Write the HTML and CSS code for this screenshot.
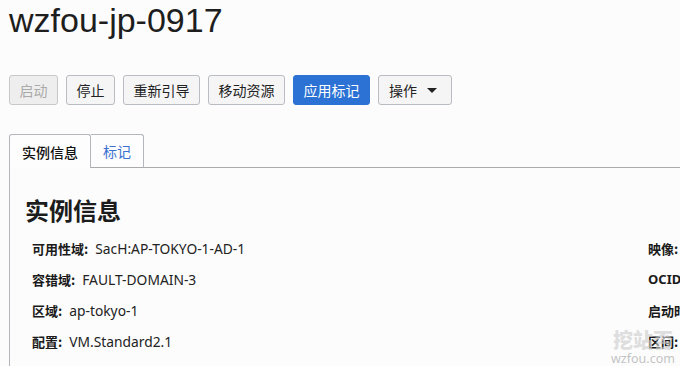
FILE: index.html
```html
<!DOCTYPE html>
<html lang="zh">
<head>
<meta charset="utf-8">
<link rel="stylesheet" href="styles.css">
</head>
<body>
<div class="page">
  <h1 class="title">wzfou-jp-0917</h1>
  <div class="actions">
    <button class="btn" disabled>启动</button>
    <button class="btn">停止</button>
    <button class="btn">重新引导</button>
    <button class="btn">移动资源</button>
    <button class="btn primary">应用标记</button>
    <button class="btn menu">操作 <span class="caret"></span></button>
  </div>
  <div class="tabs">
    <div class="tab active">实例信息</div>
    <div class="tab link">标记</div>
    <div class="tab-rest"></div>
  </div>
  <div class="panel">
    <h2 class="section">实例信息</h2>
    <div class="grid">
      <div class="row"><span class="lbl">可用性域:</span><span class="val">SacH:AP-TOKYO-1-AD-1</span></div>
      <div class="row"><span class="lbl">映像:</span></div>
      <div class="row"><span class="lbl">容错域:</span><span class="val">FAULT-DOMAIN-3</span></div>
      <div class="row"><span class="lbl latin">OCID:</span></div>
      <div class="row"><span class="lbl">区域:</span><span class="val">ap-tokyo-1</span></div>
      <div class="row"><span class="lbl">启动时间:</span></div>
      <div class="row"><span class="lbl">配置:</span><span class="val">VM.Standard2.1</span></div>
      <div class="row"><span class="lbl">区间:</span></div>
    </div>
  </div>
  <div class="watermark"><span class="wm-cn">挖站否</span><span class="wm-en">wzfou.com</span></div>
</div>
</body>
</html>
```

FILE: styles.css
```css
html, body {
  margin: 0;
  padding: 0;
  background: #fcfcfc;
  overflow: hidden;
}
body {
  font-family: "Noto Sans", "Noto Sans CJK SC", sans-serif;
  color: #222;
  width: 680px;
  height: 366px;
}
.page {
  position: relative;
  padding-left: 9px;
  height: 366px;
  overflow: hidden;
}
.title {
  margin: 0;
  font-family: "Liberation Sans", "Noto Sans CJK SC", sans-serif;
  font-weight: normal;
  font-size: 34px;
  line-height: 40px;
  color: #1e1e1e;
}
.actions {
  display: flex;
  gap: 8px;
  margin-top: 35px;
}
.btn {
  height: 30px;
  padding: 0 9.5px;
  border: 1px solid #b9bcc0;
  border-radius: 3px;
  background: #f5f5f5;
  color: #222;
  font-family: "Noto Sans CJK SC", sans-serif;
  font-size: 14px;
  line-height: 28px;
  display: flex;
  align-items: center;
}
.btn[disabled] {
  color: #aaa;
  background: #eeeeee;
  border-color: #c8c8c8;
}
.btn.primary {
  background: #2b72d4;
  border-color: #2b72d4;
  color: #fff;
}
.btn.menu {
  padding: 0 14px 0 10px;
  gap: 10px;
}
.caret {
  width: 0;
  height: 0;
  border-left: 5px solid transparent;
  border-right: 5px solid transparent;
  border-top: 5px solid #222;
}
.tabs {
  display: flex;
  margin-top: 29px;
  height: 34px;
}
.tab {
  font-family: "Noto Sans CJK SC", sans-serif;
  font-size: 14px;
  line-height: 32px;
  padding: 0 12px;
  border: 1px solid #b3b6ba;
  border-bottom: none;
  border-radius: 3px 3px 0 0;
  background: #fdfdfd;
  box-sizing: border-box;
  height: 34px;
}
.tab.active {
  color: #111;
  font-weight: 500;
  padding-top: 1px;
}
.tab.link {
  color: #3a70d0;
  border-left: none;
  height: 34px;
  border-bottom: 1px solid #aaaaaa;
  border-radius: 0 3px 0 0;
}
.tab-rest {
  flex: 1;
  border-bottom: 1px solid #aaaaaa;
  height: 33px;
}
.panel {
  border-left: 1px solid #b3b6ba;
  padding-left: 15px;
  height: 220px;
  margin-top: -1px;
}
.section {
  margin: 0;
  padding-top: 26px;
  font-family: "Noto Sans CJK SC", sans-serif;
  font-size: 24px;
  font-weight: bold;
  line-height: 34px;
  color: #1c1c1c;
}
.grid {
  display: grid;
  grid-template-columns: 616px 200px;
  padding-left: 7px;
  margin-top: 6px;
}
.row {
  height: 31px;
  line-height: 31px;
  font-size: 13px;
  white-space: nowrap;
}
.lbl {
  font-family: "Noto Sans CJK SC", sans-serif;
  font-weight: bold;
  color: #1a1a1a;
  margin-right: 7px;
}
.lbl.latin {
  font-family: "Noto Sans", sans-serif;
}
.val {
  font-family: "Noto Sans", "Noto Sans CJK SC", sans-serif;
  font-size: 13.8px;
  color: #222;
}
.watermark {
  position: absolute;
  left: 611px;
  top: 330px;
  display: flex;
  flex-direction: column;
  align-items: center;
  line-height: 1;
  pointer-events: none;
}
.wm-cn {
  font-family: "Noto Sans CJK SC", sans-serif;
  font-weight: 900;
  font-size: 20px;
  color: rgba(205, 205, 205, 0.65);
}
.wm-en {
  font-family: "Noto Sans", sans-serif;
  font-size: 12.5px;
  color: rgba(175, 175, 175, 0.75);
  margin-top: 3px;
}
```
